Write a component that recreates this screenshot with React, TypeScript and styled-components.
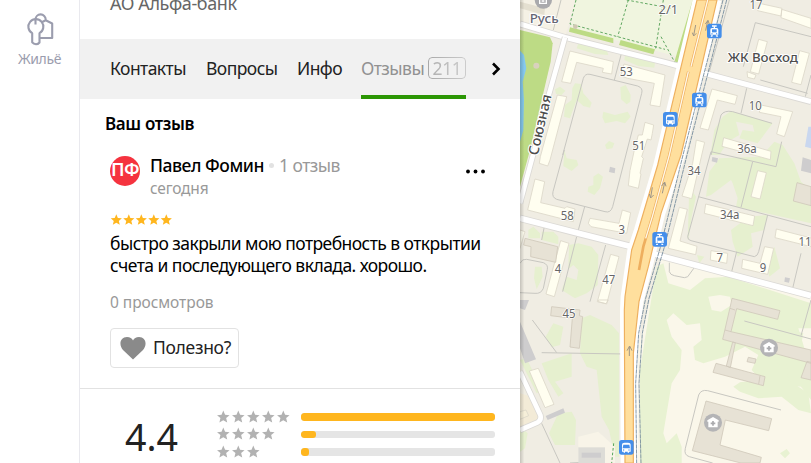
import React from "react";
import styled, { createGlobalStyle } from "styled-components";

const Global = createGlobalStyle`
  * { box-sizing: border-box; }
  body { margin: 0; background: #fff; overflow: hidden; font-family: "Noto Sans", "Open Sans", sans-serif; }
`;

const Page = styled.div`
  display: grid;
  grid-template-columns: 80px 440px 1fr;
  height: 463px;
  overflow: hidden;
`;

const Rail = styled.nav`
  display: flex;
  flex-direction: column;
  align-items: center;
  padding-top: 11px;
  border-right: 1px solid #e9e9ee;
  color: #9b9dae;
`;

const RailLabel = styled.span`
  margin-top: 3px;
  font-size: 14px;
  line-height: 20px;
  letter-spacing: -0.4px;
`;

const Panel = styled.main`
  min-width: 0;
  overflow: hidden;
  background: #fff;
`;

const Legal = styled.div`
  display: flex;
  align-items: flex-start;
  height: 39px;
  padding-left: 30px;
  font-size: 18px;
  line-height: 24px;
  letter-spacing: -0.4px;
  color: #666;
`;

const LegalText = styled.div`
  margin-top: -9px;
`;

const Tabs = styled.div`
  display: flex;
  height: 60px;
  padding-left: 30px;
  background: #f1f1f1;
`;

const Tab = styled.div<{ $w: number; $gap: number; $active?: boolean }>`
  display: flex;
  align-items: center;
  width: ${(p) => p.$w}px;
  margin-right: ${(p) => p.$gap}px;
  padding-bottom: 2px;
  font-size: 17.5px;
  letter-spacing: -0.55px;
  white-space: nowrap;
  color: ${(p) => (p.$active ? "#929292" : "#222")};
  border-bottom: 4px solid ${(p) => (p.$active ? "#2b9604" : "transparent")};
  border-top: 4px solid transparent;
`;

const Count = styled.span`
  margin-left: auto;
  width: 38px;
  height: 22px;
  border: 1px solid #a8a8a8;
  border-radius: 4px;
  line-height: 20px;
  text-align: center;
  letter-spacing: -0.4px;
  color: #adadad;
  mask-image: linear-gradient(90deg, #000, rgba(0, 0, 0, 0.5));
`;

const Arrow = styled.svg`
  margin: 23px 0 0 24px;
`;

const Title = styled.h2`
  margin: 0;
  height: 51px;
  padding: 14px 0 0 25px;
  font-size: 17px;
  line-height: 22px;
  font-weight: 600;
  letter-spacing: -0.35px;
  color: #000;
`;

const Author = styled.div`
  display: flex;
  height: 63px;
  padding-left: 30px;
`;

const Avatar = styled.div`
  display: flex;
  justify-content: center;
  width: 30px;
  height: 30px;
  margin: 6px 10px 0 0;
  border-radius: 50%;
  background: #f5333f;
  overflow: hidden;
  color: #fff;
  font-size: 18px;
  font-weight: 600;
  line-height: 27px;
  letter-spacing: -0.5px;
`;

const AuthorInfo = styled.div`
  width: 315px;
  padding-top: 3px;
`;

const NameRow = styled.div`
  display: flex;
  align-items: center;
  font-size: 17.5px;
  line-height: 24px;
  color: #999;
  letter-spacing: -0.55px;
  white-space: nowrap;
`;

const Name = styled.span`
  width: 114px;
  font-weight: 500;
  letter-spacing: -0.45px;
  color: #000;
`;

const Dot = styled.i`
  width: 5px;
  height: 5px;
  margin: 0 5px;
  border-radius: 50%;
  background: #e2e2e2;
`;

const DateLine = styled.div`
  font-size: 15.5px;
  line-height: 22px;
  letter-spacing: -0.15px;
  color: #999;
`;

const Menu = styled.svg`
  margin-top: 19px;
`;

const Stars = styled.svg`
  display: block;
`;

const Review = styled.section`
  padding-left: 30px;
  height: 175px;
`;

const Body = styled.p`
  margin: 0;
  font-size: 17.5px;
  line-height: 22px;
  letter-spacing: -0.55px;
  white-space: nowrap;
  color: #000;
`;

const BodyBlock = styled.div`
  padding-top: 5px;
`;

const Views = styled.div`
  margin: 15px 0 15px;
  font-size: 15.5px;
  line-height: 22px;
  letter-spacing: -0.05px;
  color: #999;
`;

const Useful = styled.button`
  display: flex;
  align-items: center;
  width: 129px;
  height: 40px;
  padding: 0 0 3px 9px;
  border: 1px solid #e2e2e2;
  border-radius: 4px;
  background: #fff;
  font: 17.5px "Noto Sans", sans-serif;
  letter-spacing: -0.3px;
  color: #222;
  svg { margin: 3px 7px 0 0; flex: none; }
`;

const Summary = styled.section`
  display: flex;
  height: 75px;
  border-top: 1px solid #e2e2e2;
`;

const Score = styled.div`
  width: 137px;
  padding: 22px 0 0 45px;
  font-size: 37.5px;
  line-height: 52px;
  color: #222;
`;

const Bars = styled.div`
  display: flex;
  flex-direction: column;
  padding-top: 19px;
`;

const BarRow = styled.div`
  display: flex;
  align-items: center;
  height: 17.5px;
  svg { width: 84px; }
`;

const Track = styled.div`
  width: 194px;
  height: 7.5px;
  border-radius: 3px;
  background: #e5e5e5;
  overflow: hidden;
`;

const Fill = styled.div<{ $w: number }>`
  width: ${(p) => p.$w}px;
  height: 100%;
  border-radius: 3px;
  background: #ffb61e;
`;

const MapBox = styled.aside`
  overflow: hidden;
  background: #f0ede3;
  svg { display: block; }
`;

const starPath = "M0-6.7 1.8-2.3 6.4-1.9 2.9 1.1 4 5.6 0 3.200-4 5.600-2.900 1.100-6.400-1.900-1.800-2.300Z";

function StarRow({ count, step, scale, color, width, height }: { count: number; step: number; scale: number; color: string; width: number; height: number }) {
  return (
    <Stars width={width} height={height} viewBox={`0 0 ${width} ${height}`} fill={color}>
      {Array.from({ length: count }, (_, i) => (
        <path key={i} d={starPath} transform={`translate(${6.3 + i * step} ${height / 2}) scale(${scale})`} />
      ))}
    </Stars>
  );
}

const P = { fill: "#fffef0", stroke: "#dcd7c9", strokeWidth: 2.5, strokeLinejoin: "round" as const };
const G = { fill: "#e6f0cf" };
const B = { fill: "#e7e2d5", stroke: "#d0c9ba", strokeWidth: 2.5, strokeLinejoin: "round" as const };
const L = { fill: "none", stroke: "#c8c7c1", strokeWidth: 3 };

function Road({ d, w }: { d: string; w: number }) {
  return (
    <g fill="none" strokeLinejoin="round">
      <path d={d} stroke="#dbd9d5" strokeWidth={w + 5} />
      <path d={d} stroke="#fff" strokeWidth={w} />
    </g>
  );
}

function Stop({ x, y, tram }: { x: number; y: number; tram?: boolean }) {
  return (
    <g transform={`translate(${x} ${y})`}>
      <rect x="-22" y="-22" width="44" height="44" rx="8" fill="#448eea" />
      {tram ? (
        <g fill="#fff">
          <path d="M-7-17H7V-13H2V-9H7Q12-9 12-3V11H-12V-3Q-12-9-7-9H-2V-13H-7Z" />
          <path d="M-10 13H-4L-6 17H-11ZM4 13H10L11 17H6Z" />
          <rect x="-7" y="-5" width="14" height="9" fill="#448eea" />
          <circle cx="-7" cy="8" r="1.8" fill="#448eea" /><circle cx="7" cy="8" r="1.8" fill="#448eea" />
        </g>
      ) : (
        <g fill="#fff">
          <path d="M-13 13V-7Q-13-14-5-14H5Q13-14 13-7V13H8V16H4V13H-4V16H-8V13Z" />
          <path d="M-9-8H9L11 3H-11Z" fill="#448eea" />
          <circle cx="-8" cy="8" r="2" fill="#448eea" /><circle cx="8" cy="8" r="2" fill="#448eea" />
        </g>
      )}
    </g>
  );
}

function Clinic({ x, y }: { x: number; y: number }) {
  return (
    <g transform={`translate(${x} ${y})`}>
      <circle r="27" fill="#b4b4b6" />
      <path d="M-17-7 0-17 17-7V-3H14V14H-14V-3H-17Z" fill="#fff" />
      <path d="M0-5V9M-7 2H7" stroke="#aaaaad" strokeWidth="5" />
    </g>
  );
}

const labels: [number, number, string][] = [
  [334, 229, "53"], [371, 451, "51"], [157, 661, "58"], [320, 702, "3"], [129, 819, "4"],
  [281, 851, "47"], [162, 955, "45"], [723, 28, "17"], [721, 330, "10"], [696, 460, "36а"],
  [537, 524, "34"], [644, 658, "34а"], [614, 785, "7"], [744, 816, "9"], [870, 737, "11"], [460, 42, "2/1"],
];

const leftEdge = "546 0 448 410 428 495 370 690 350 750 330 890 328 930 330 1389";
const rightEdge = "355 1389 355 1060 372 905 400 800 438 640 498 465 606 0";

function CityMap() {
  return (
    <svg width="291" height="463" viewBox="15 0 873 1389">
      <defs>
        <linearGradient id="edge"><stop offset="0" stopColor="#000" stopOpacity=".18" /><stop offset="1" stopColor="#000" stopOpacity="0" /></linearGradient>
      </defs>
      <rect x="15" width="873" height="1389" fill="#f0ede3" />
      <path d="M15 0H185L150 112 15 75Z" fill="#f5f1e5" />
      <path d="M15 5 90 25 88 45 15 25Z" fill="#e4dfd0" />
      <path d="M440 770 888 885V1389H365V1050Z" fill="#faf7ea" />

      {/* parks and water */}
      <path d="M15 90 105 112 113 130 107 185 45 450 15 560Z" fill="#bddb85" />
      <path d="M15 152 27 165 34 205 23 245 27 300 25 390 15 425Z" fill="#85c9ee" />
      <circle cx="64" cy="197" r="9" fill="#d9d1bd" />
      <path d="M182 0 165 85 490 170 540 0Z" fill="#f0f5df" />
      <path d="M165 82 295 115V130L162 95ZM317 120 420 148 415 163 312 135ZM533 0H548L498 190 478 186Z" fill="#bddb85" />
      <g fill="none" stroke="#62a862" strokeWidth="3" strokeDasharray="8 6">
        <path d="M183 0 165 72 450 148M340 0 308 110M335 0 470 25M445 0 422 145M438 110 480 188" />
      </g>
      <circle cx="181" cy="80" r="7" fill="#cfc8b3" />

      {/* lawns between the blocks */}
      <g {...G}>
        <path d="M190 130 275 150 280 165 240 162 185 145ZM330 165 420 188 418 203 370 198 328 180Z" />
        <path d="M180 250 198 252 205 280 230 308 225 323 205 318 185 300 165 355 147 350 150 315 170 300 172 265ZM120 268 135 260 151 272 140 285 123 282ZM316 262 332 255 347 285 346 305 335 313 318 298ZM265 335 300 345 338 335 347 350 330 370 305 363 270 370 262 352ZM270 435 282 423 298 430 292 445 275 448Z" />
        <path d="M148 450 155 475 185 480 190 495 170 513 145 498ZM235 530 250 520 264 530 255 565 238 585 218 575 220 560 235 555Z" />
        <path d="M40 690 55 680 75 700 75 715 40 715ZM80 695 115 695 130 710 130 733 80 720ZM162 735 190 730 230 740 250 765 248 855 215 880 180 895 140 870 155 830 185 840 190 810 175 795 160 808ZM60 800 80 800 83 830 65 868 57 835Z" />
        <path d="M92 1010 115 970 145 980 135 1035 110 1042ZM200 955 225 945 290 975 312 1000 312 1370H300L282 1290 260 1250 245 1110 215 1100 195 1060ZM80 1090 170 1060 170 1130 120 1145 145 1180 130 1190 100 1140ZM102 1300 130 1240 170 1235 183 1260 180 1335 120 1335ZM15 1080 35 1075 80 1170 65 1180ZM15 1280 38 1300 30 1345 15 1355Z" />
      </g>
      <g {...G} transform="translate(438 0)">
        <path d="M185 350 210 333 335 370 290 430 235 415 245 390 280 395 275 375 225 365 235 405 200 425 175 465 148 465 160 390ZM340 425 365 435 400 490 420 545 450 570V670L315 640 225 620 230 595 215 550 210 540 150 585 135 590 145 515 175 475 300 470Z" />
        <path d="M210 690 230 675 265 650 320 645 310 690 270 700 275 740 230 770 215 725ZM85 560 105 590 92 650 85 705 80 720ZM108 765 130 770 115 790ZM340 740 357 805 325 830 320 810Z" />
      </g>
      <g fill="#e8f2d2">
        <path d="M425 800 445 790 460 850 525 870 570 835 640 830 888 910V985H850L888 1110V1200L858 1160 780 1150 770 1120 740 1145 710 1110 730 1065 690 1040 630 1070 565 1090 540 1080 535 1040 560 1020 555 970 515 975 475 940 455 960 470 1010 500 1050 495 1110 470 1150 445 1300 455 1330 485 1300 500 1340 500 1389H375V1110L410 890Z" />
        <path d="M655 1160 675 1147 730 1140 770 1090 815 1095 820 1140 880 1180 888 1240 850 1230 800 1190 730 1195 675 1175ZM795 1360 815 1347 825 1360 810 1375ZM725 960 760 955 790 980 865 1000 860 1025 800 1000 730 980Z" />
      </g>
      <path d="M615 885 580 890 590 930 618 935 650 915 645 890Z" fill="#faf7ea" />
      <path d="M190 1310 250 1295 300 1340V1389H190Z" fill="#f8f4e8" />
      <path d="M15 1180 50 1190 75 1260 65 1270 15 1285Z" fill="#f3ebd7" />

      {/* paths */}
      <g {...L}>
        <path d="M143 465 205 235Q210 220 225 223L368 258Q385 264 380 280L293 620Q287 640 270 635L125 598Q110 592 114 575L148 450M318 165 298 240M209 620 190 690M185 710 143 875M272 735 225 905M88 680 80 720M15 790Q22 775 35 778L85 788Q100 794 97 808L85 865Q78 882 60 880L15 878" />
        <path d="M52 960 125 1058M80 1058 330 1062M80 1270 135 1389M165 1389 243 1385M138 0 115 90" />
        <g transform="translate(438 0)">
          <path d="M205 0 145 215M247 200 283 68 450 110M298 240 440 280M257 265 240 340M150 465 180 345Q190 330 215 335L333 370M362 425 345 500 150 455 80 710Q80 720 90 722L280 770Q290 768 293 755L320 645M112 590 450 680M275 485 240 622M227 755 212 815M420 760 395 865M433 290 450 225M25 788V815Q28 825 40 827L70 833Q82 833 86 822L102 800M250 963 450 1017M450 900 420 1007M360 1230 140 1172Q120 1168 113 1185L73 1345Q68 1365 85 1370L155 1389" />
        </g>
      </g>

      <Road d="M15 72 150 112 300 150 450 187 588 225 888 305" w={15} />
      <Road d="M150 112 100 290 50 480 15 610" w={14} />
      <Road d="M15 655 190 700 350 740 438 768 888 887" w={17} />
      <Road d="M15 1115 76 1245Q80 1260 68 1267L15 1290" w={14} />

      {/* residential buildings */}
      <g {...P}>
        <path d="M165 153 295 185 290 222 262 217 265 205 185 187 167 250 140 245ZM327 192 450 225 435 320 405 315 418 250 338 235 318 228ZM127 285 155 290 105 480 98 498 73 490 76 470ZM390 367 416 375 412 400 408 420 397 417 380 470 385 475 375 520 378 522 370 565 340 557 345 512 358 450 370 405 382 405Z" />
        <path d="M60 537 89 545 77 608 150 625 155 620 180 627 175 665 38 630ZM322 630 347 638 335 700 228 680 220 670 225 655 312 670ZM137 722 162 730 118 890 93 882ZM287 763 312 770 275 912 247 905ZM15 690 30 695 15 745ZM250 900H280L273 911 250 905Z" />
        <path d="M43 1113 70 1105 117 1213 90 1223Z" />
        <path d="M15 1235 33 1230 41 1247 15 1258Z" fill="#f6efd9" />
        <g transform="translate(438 0)">
          <path d="M295 10 363 25 360 48 290 32ZM362 28 450 55V85L360 53ZM293 118 319 125 293 222 268 215ZM258 215 285 225 280 237 260 232ZM416 152 445 160 420 254 392 247ZM153 267 229 287 222 313 169 300 142 390 117 384ZM300 315 395 335 370 410 347 402 360 350 295 337ZM188 413 330 454 328 479 183 439ZM106 420 131 427 92 596 63 588 95 490ZM290 512 316 518 297 597 270 590ZM134 612 281 648 276 677 130 640ZM55 622 79 628 57 723 108 739 104 764 22 745ZM150 752 200 760 197 790 148 780ZM245 778 297 790 311 740 338 745 320 823 242 805ZM346 687 450 714V740L342 713Z" />
        </g>
      </g>
      <g {...B}>
        <path d="M30 715 128 740 122 787 47 770 48 740 26 735ZM110 920 195 930 193 947 203 950 193 1045 165 1041 172 955 107 947Z" />
        <g transform="translate(438 0)">
          <path d="M408 548 450 560V617L397 603Z" />
          <path d="M213 895 357 932 350 958 227 926 210 995 450 1050V1090L185 1018 207 923ZM215 1026 223 1028 208 1103 196 1098ZM165 1090 312 1130 307 1157 156 1117ZM262 1072 285 1077 282 1090 258 1085ZM135 1203 332 1256 323 1292 193 1260 177 1335 301 1372 297 1389H240L94 1352ZM438 1084 450 1087V1140L420 1133Z" />
          <path d="M297 1127 293 1152M207 925 222 930M192 990 210 995" />
        </g>
      </g>
      <g fill="#cecdce">
        <path d="M15 965 63 1078 30 1090 15 1045ZM15 900H42L30 930 15 925ZM92 1248 145 1225 150 1238 98 1260ZM863 472 888 480V520L858 512ZM592 471 609 475 606 488 590 484ZM285 500 301 505 299 520 282 516ZM810 832 825 835 822 848 808 845Z" />
        <path d="M190 1342H270V1389H190Z" fill="#dddcd7" />
        <path d="M200 1358H258V1373H200Z" />
      </g>
      <path d="M880 380H888V445L870 440Z" fill="#c9d7ef" />

      {/* avenue */}
      <polyline points={leftEdge} fill="none" stroke="#fff" strokeWidth="26" />
      <polyline points={rightEdge} fill="none" stroke="#fff" strokeWidth="26" />
      <polygon points={`${leftEdge} ${rightEdge}`} fill="#ffdf9d" stroke="#eeb05f" strokeWidth="3.5" />
      <path d="M578 0 528 200M520 215 463 465 412 650 385 740 372 810" fill="none" stroke="#eeae5e" strokeWidth="8" />
      <path d="M578 0 528 200M520 215 463 465 412 650 392 715" fill="none" stroke="#fff8e8" strokeWidth="4" />
      <g fill="none" stroke="#6c8497" strokeWidth="2.5" strokeDasharray="13 2">
        <path d="M624 0 504 465 438 735 392 895 371 1000 362 1150 365 1389" />
        <path d="M635 0 516 465 450 735 402 895 382 1000 372 1150 378 1389" />
      </g>
      <g fill="none" stroke="#9f9687" strokeWidth="3">
        <path d="M542 75 536 106M532 98 536 108 544 100M572 92 578 62M571 72 579 61 583 73M412 562 407 592M403 582 407 594 416 585M442 580 449 548M440 558 449 546 453 559M343 1068V1040M336 1052 344 1038 351 1052" />
      </g>
      <path d="M296 1330 290 1389" fill="none" stroke="#55a65b" strokeWidth="3" strokeDasharray="8 6" />

      <g fontFamily="Noto Sans" fontSize="38" textAnchor="middle" fill="#666" stroke="#fff" strokeWidth="5" paintOrder="stroke" strokeLinejoin="round">
        {labels.map(([x, y, t]) => <text key={t} x={x} y={y} textLength={t.length * 19.5} lengthAdjust="spacingAndGlyphs">{t}</text>)}
      </g>
      <g fontFamily="Noto Sans" fill="#4d4d4d" stroke="#fff" strokeWidth="6" paintOrder="stroke" strokeLinejoin="round">
        <text x="44" y="69" fontSize="37" fontWeight="500" fill="#666675" textLength="87" lengthAdjust="spacingAndGlyphs">Русь</text>
        <text x="638" y="186" fontSize="40" fontWeight="500" textLength="211" lengthAdjust="spacingAndGlyphs">ЖК Восход</text>
        <text transform="translate(68 468) rotate(-77)" fontSize="42" fontWeight="500" textLength="186" lengthAdjust="spacingAndGlyphs">Союзная</text>
      </g>

      <Stop x={598} y={93} tram />
      <Stop x={553} y={300} tram />
      <Stop x={466} y={358} />
      <Stop x={434} y={718} tram />
      <Stop x={334} y={1342} />
      <Clinic x={762} y={1043} />
      <Clinic x={594} y={1268} />
      <circle cx="85" cy="0" r="26" fill="#aaaaad" />
      <path d="M74-5V10H94V-5M80 3H88" fill="none" stroke="#fff" strokeWidth="4" />
      <rect x="15" width="13" height="1389" fill="url(#edge)" />
    </svg>
  );
}

export default function App() {
  return (
    <>
      <Global />
      <Page>
        <Rail>
          <svg width="30" height="35" viewBox="0 0 30 35" fill="none" stroke="#9b9dae" strokeWidth="2.1" strokeLinejoin="round">
            <path d="M7.200 22.200A7.500 7.500 0 1 1 14.500 22.200V31.500Q13 33.300 11 33.300 8.600 33 7.200 31.300Z" />
            <path d="M10.500 13.500V8.500A5.100 5.100 0 0 1 20.700 8.500V9.300M16.800 11.300 20.700 9.300 27.200 12.500V27H14.500" />
          </svg>
          <RailLabel>Жильё</RailLabel>
        </Rail>
        <Panel>
          <Legal><LegalText>АО Альфа-банк</LegalText></Legal>
          <Tabs>
            <Tab $w={76} $gap={20}>Контакты</Tab>
            <Tab $w={71} $gap={20}>Вопросы</Tab>
            <Tab $w={45} $gap={19}>Инфо</Tab>
            <Tab $w={105} $gap={0} $active>Отзывы<Count>211</Count></Tab>
            <Arrow width="12" height="14" viewBox="0 0 12 14" fill="none" stroke="#000" strokeWidth="2.6"><path d="M3 1.500 8.500 7 3 12.500" /></Arrow>
          </Tabs>
          <Title>Ваш отзыв</Title>
          <Author>
            <Avatar>ПФ</Avatar>
            <AuthorInfo>
              <NameRow><Name>Павел Фомин</Name><Dot />1 отзыв</NameRow>
              <DateLine>сегодня</DateLine>
            </AuthorInfo>
            <Menu width="20" height="6" viewBox="0 0 20 6"><circle cx="3" cy="2.500" r="1.900" /><circle cx="10.500" cy="2.500" r="1.900" /><circle cx="18" cy="2.500" r="1.900" /></Menu>
          </Author>
          <Review>
            <StarRow count={5} step={12.5} scale={0.87} color="#ffb61e" width={64} height={14} />
            <BodyBlock>
              <Body>быстро закрыли мою потребность в открытии</Body>
              <Body>счета и последующего вклада. хорошо.</Body>
            </BodyBlock>
            <Views>0 просмотров</Views>
            <Useful>
              <svg width="26" height="23" viewBox="0 0 26 23" fill="#8a8a8a"><path d="M13 22.500 3 13C-1.500 8 0 0 7 0 10 0 12 1.500 13 3.500 14 1.500 16 0 19 0 26 0 27.500 8 23 13Z" /></svg>
              Полезно?
            </Useful>
          </Review>
          <Summary>
            <Score>4.4</Score>
            <Bars>
              {[[5, 194], [4, 15], [3, 8]].map(([n, w]) => (
                <BarRow key={n}>
                  <StarRow count={n} step={15} scale={0.98} color="#b2b2b2" width={84} height={14} />
                  <Track><Fill $w={w} /></Track>
                </BarRow>
              ))}
            </Bars>
          </Summary>
        </Panel>
        <MapBox><CityMap /></MapBox>
      </Page>
    </>
  );
}
